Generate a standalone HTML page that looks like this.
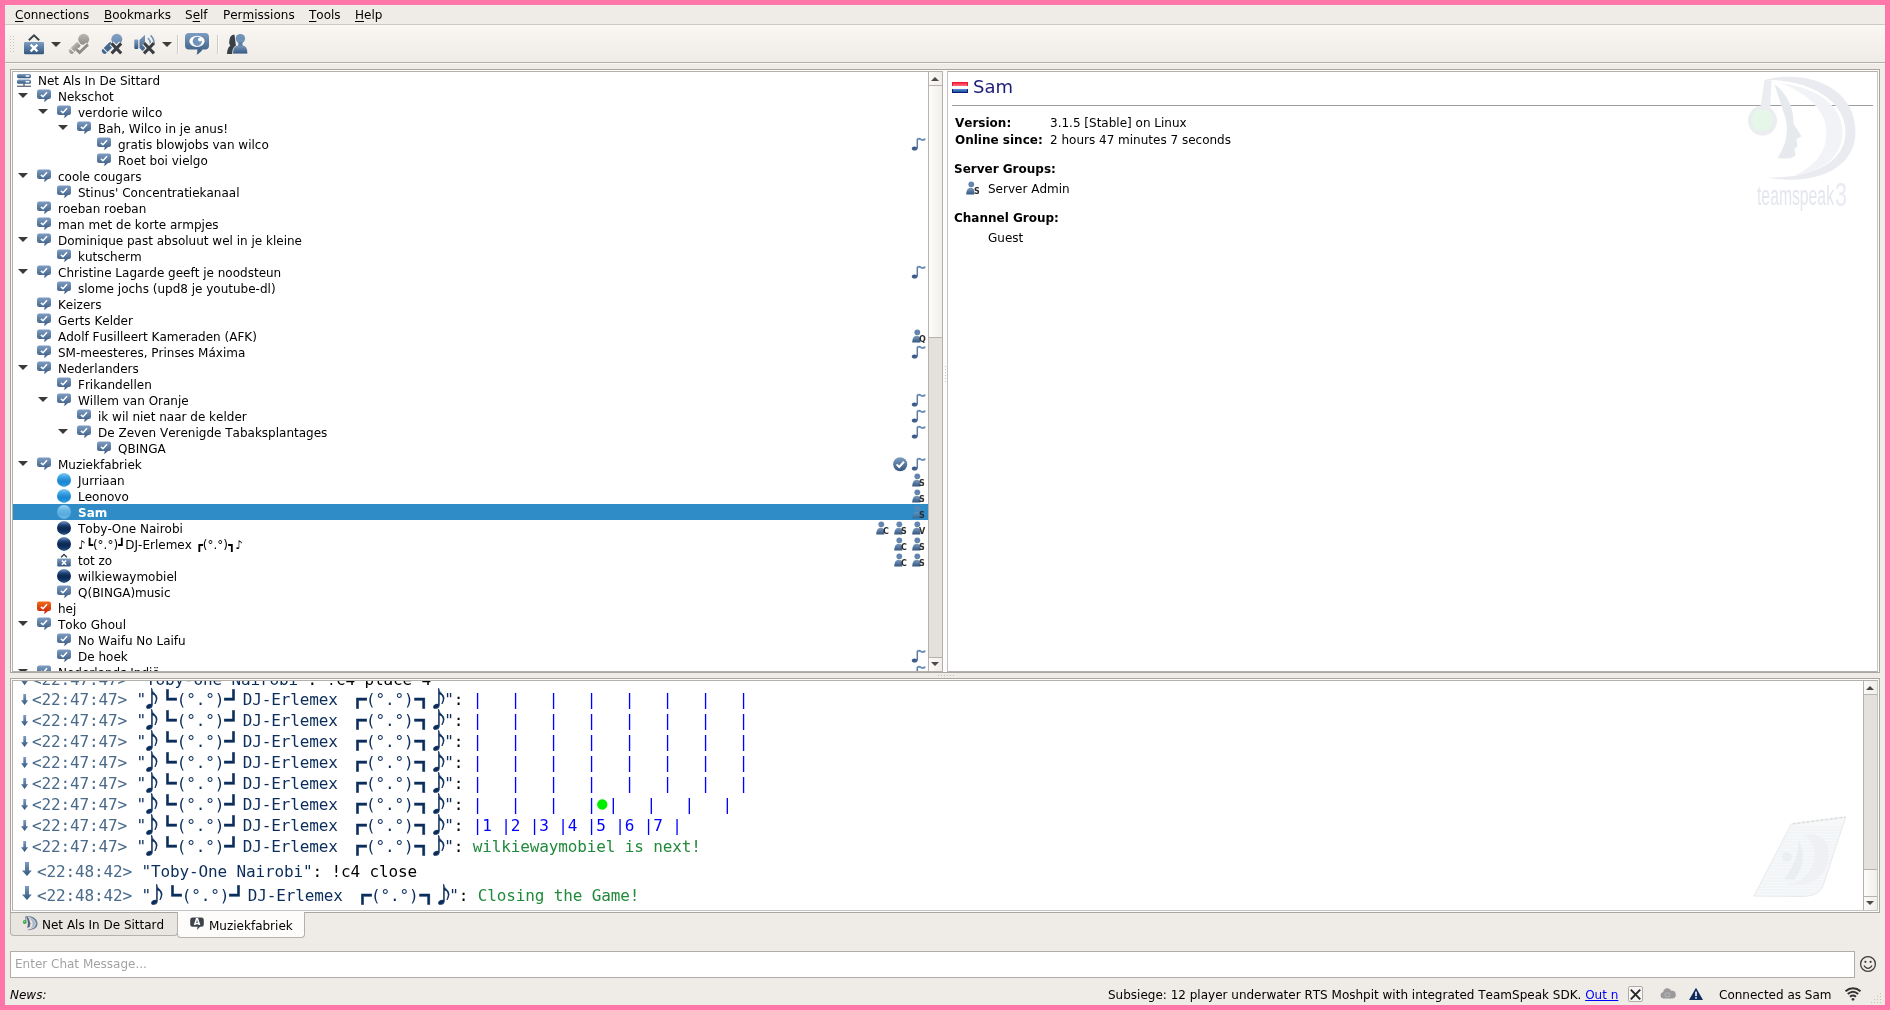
<!DOCTYPE html>
<html lang="nl">
<head>
<meta charset="utf-8">
<title>TeamSpeak 3</title>
<style>
html,body{margin:0;padding:0}
body{width:1890px;height:1010px;overflow:hidden;background:#ff77a8;position:relative;
 font-family:"DejaVu Sans","Liberation Sans",sans-serif;font-size:12px;color:#000;font-kerning:none}
#win{position:absolute;left:5px;top:5px;width:1880px;height:1000px;background:#efebe7;overflow:hidden;will-change:transform}
.abs{position:absolute}
/* menubar */
#menubar{position:absolute;left:0;top:0;width:1880px;height:19px;background:#efebe7;border-bottom:1px solid #cdc9c3}
#menubar span{position:absolute;top:3px;line-height:14px;white-space:nowrap}
#menubar u{text-decoration:underline;text-underline-offset:2px}
/* toolbar */
#toolbar{position:absolute;left:0;top:20px;width:1880px;height:37px;background:linear-gradient(#f9f6f3,#f5f2ee 40%,#efebe7);border-top:1px solid #fbf9f7;box-sizing:border-box}
#tbline{position:absolute;left:0;top:57px;width:1880px;height:1px;background:#b4b0aa}
#tbline2{position:absolute;left:0;top:58px;width:1880px;height:1px;background:#f8f6f4}
.sep{position:absolute;top:30px;width:1px;height:19px;background:#cfcbc5;border-right:1px solid #fbfaf8}
.dd{position:absolute;width:0;height:0;border-left:5px solid transparent;border-right:5px solid transparent;border-top:5px solid #3c3c3c;top:37px}
/* frames */
.frame{position:absolute;border:1px solid #a9a5a0;background:#fdfcfb;box-sizing:border-box}
.panel{position:absolute;border:1px solid #b4b0ab;background:#fff;box-sizing:border-box;overflow:hidden}
.frame .inner{position:absolute;left:1px;top:1px;right:1px;bottom:1px;border:1px solid #b4b0ab;border-right-color:#c6c5c4;border-bottom-color:#c6c5c4;background:#fff;overflow:hidden}
.frame.flat .inner{bottom:0;border-bottom-color:#b4b0ab}
/* tree */
.row{position:absolute;left:0;width:915px;height:16px;line-height:16px;white-space:nowrap}
.row .t{position:absolute;top:1px;line-height:16px}
.row.sel{background:#308cc6;color:#fff;font-weight:bold}
.row.sel .ic.pp{opacity:.6}
.ic{position:absolute;overflow:visible}
.tw{position:absolute;top:5px;margin-left:-.5px;width:0;height:0;border-left:5px solid transparent;border-right:5px solid transparent;border-top:5.500px solid #3a3a3a}
.pl{position:absolute;top:5.5px;font-size:8px;line-height:11px;font-weight:bold;color:#2d2d2d;font-family:"DejaVu Sans","Liberation Sans",sans-serif}
/* scrollbars */
.sb{position:absolute;background:#e4e1dd;border-left:1px solid #b6b2ad;box-sizing:border-box}
.sb .btn{position:absolute;left:0;right:0;height:13px;background:linear-gradient(90deg,#fbfaf9,#f1eeea)}
.sb .thumb{position:absolute;left:0;right:0;background:linear-gradient(90deg,#fdfcfb,#f1eeea);border-top:1px solid #b6b2ad;border-bottom:1px solid #b6b2ad;box-sizing:border-box}
.ar-up{position:absolute;left:2px;width:0;height:0;border-left:4px solid transparent;border-right:4px solid transparent;border-bottom:4px solid #4a4a4a}
.ar-dn{position:absolute;left:2px;width:0;height:0;border-left:4px solid transparent;border-right:4px solid transparent;border-top:4px solid #4a4a4a}
/* info */
#info b{font-weight:bold}
#info .l{position:absolute;white-space:nowrap;line-height:15px}
/* chat */
.cl{position:absolute;left:0;width:1850px;white-space:pre;font-family:"DejaVu Sans Mono","Liberation Mono",monospace;font-size:16px;letter-spacing:-0.133px}
.ct{position:absolute;left:0;top:0;margin-left:19px}
.ts{color:#4a6a8a}.nm{color:#0b2d5b}.mk{color:#000}.mb{color:#0000ff}.mg{color:#218a3c}
.dot{color:#00ee00;display:inline-block;width:12.4px;text-align:center;font-size:17.5px;line-height:0;letter-spacing:0;position:relative;top:-1.2px}
.fn{font-family:"Noto Sans CJK JP","IPAGothic",monospace;font-size:21px;letter-spacing:0;-webkit-text-stroke:0.6px currentColor;line-height:0;position:relative;top:0.7px;margin:0 -4.25px 0 -4.65px}
.fn.r,.fb.r{left:.8px}
.fb{font-family:"Noto Sans CJK JP","IPAGothic",monospace;font-size:18.5px;letter-spacing:0;-webkit-text-stroke:0.5px currentColor;line-height:0;position:relative;top:0.5px;margin:0 -0.05px 0 0.15px}
/* tabs */
.tab{position:absolute;box-sizing:border-box;border:1px solid #b4b0ab;border-top:none;border-radius:0 0 4px 4px;white-space:nowrap}
/* status */
#status span{position:absolute;white-space:nowrap;line-height:15px}
</style>
</head>
<body>
<svg width="0" height="0" style="position:absolute">
 <defs>
  <linearGradient id="gb" x1="0" y1="0" x2="0" y2="1"><stop offset="0" stop-color="#7e9dc2"/><stop offset="1" stop-color="#33557d"/></linearGradient>
  <linearGradient id="gb2" x1="0" y1="0" x2="0" y2="1"><stop offset="0" stop-color="#86a3c6"/><stop offset="1" stop-color="#6688b0"/></linearGradient>
  <linearGradient id="gg" x1="0" y1="0" x2="0" y2="1"><stop offset="0" stop-color="#b9b6b3"/><stop offset="1" stop-color="#8f8c89"/></linearGradient>
  <linearGradient id="gr" x1="0" y1="0" x2="0" y2="1"><stop offset="0" stop-color="#f06a1a"/><stop offset="1" stop-color="#c41a08"/></linearGradient>
  <linearGradient id="gcl" x1="0" y1="0" x2="0" y2="1"><stop offset="0" stop-color="#86cdf2"/><stop offset=".3" stop-color="#3aa3e2"/><stop offset=".6" stop-color="#1a86d0"/><stop offset=".85" stop-color="#2492d8"/><stop offset="1" stop-color="#4fb0e6"/></linearGradient>
  <linearGradient id="gcls" x1="0" y1="0" x2="0" y2="1"><stop offset="0" stop-color="#9fd3f1"/><stop offset=".35" stop-color="#68b7e6"/><stop offset=".7" stop-color="#55aade"/><stop offset="1" stop-color="#70bbe8"/></linearGradient>
  <linearGradient id="gcd" x1="0" y1="0" x2="0" y2="1"><stop offset="0" stop-color="#7b9cc6"/><stop offset=".28" stop-color="#24497c"/><stop offset=".5" stop-color="#0b2852"/><stop offset=".8" stop-color="#123563"/><stop offset="1" stop-color="#3a6397"/></linearGradient>
  <symbol id="i-ch" viewBox="0 0 16 16"><path d="M3.2 1.6h9.6a2.2 2.2 0 0 1 2.2 2.2v5a2.2 2.2 0 0 1-2.2 2.2h-.8l-3.800 3.300.5-3.300H3.200A2.200 2.200 0 0 1 1 8.800v-5a2.200 2.200 0 0 1 2.200-2.200z" fill="url(#gb)"/><path d="M4.900 6.900l2.100 1.900 4-4.500" stroke="#fff" stroke-width="1.500" fill="none"/></symbol>
  <symbol id="i-chr" viewBox="0 0 16 16"><path d="M3.2 1.6h9.6a2.2 2.2 0 0 1 2.2 2.2v5a2.2 2.2 0 0 1-2.2 2.2h-.8l-3.800 3.300.5-3.300H3.200A2.200 2.200 0 0 1 1 8.800v-5a2.200 2.200 0 0 1 2.200-2.200z" fill="url(#gr)"/><path d="M4.900 6.900l2.100 1.900 4-4.500" stroke="#fff" stroke-width="1.500" fill="none"/></symbol>
  <symbol id="i-server" viewBox="0 0 16 16"><rect x="1" y="2" width="14" height="4.200" rx="1.6" fill="url(#gb)"/><rect x="1" y="7.600" width="14" height="4.200" rx="1.6" fill="url(#gb)"/><rect x="9.500" y="3.300" width="4" height="1.500" rx=".7" fill="#fff"/><rect x="9.500" y="8.900" width="4" height="1.500" rx=".7" fill="#fff"/><rect x="7.300" y="11.800" width="1.400" height="2" fill="#46505a"/><rect x="1" y="13.700" width="14" height="1.100" fill="#46505a"/></symbol>
  <symbol id="i-cl" viewBox="0 0 16 16"><circle cx="8" cy="7.900" r="7" fill="url(#gcl)"/></symbol>
  <symbol id="i-cls" viewBox="0 0 16 16"><circle cx="8" cy="7.900" r="7" fill="url(#gcls)"/></symbol>
  <symbol id="i-cd" viewBox="0 0 16 16"><circle cx="8" cy="7.900" r="7" fill="url(#gcd)"/></symbol>
  <symbol id="i-away" viewBox="0 0 16 16"><path d="M5 5.300l3-2.900 3 2.900" stroke="#3c444c" stroke-width="1.400" fill="none"/><rect x="1.200" y="6.600" width="13.600" height="8" rx="1" fill="url(#gb)"/><path d="M5.900 8.500l4.200 4.200M10.100 8.500l-4.200 4.200" stroke="#fff" stroke-width="1.600"/></symbol>
  <symbol id="i-note" viewBox="0.8 0 16 16"><ellipse cx="4.400" cy="12.500" rx="2.800" ry="2" fill="#3c5d85"/><path d="M7.100 12.600V3" stroke="#5a7ba4" stroke-width="1.500"/><path d="M7.100 3.300c1.400-1 2.700-.6 3.900.3 1.300.9 2.700.5 3.900-1" stroke="#6d8eb6" stroke-width="1.800" fill="none"/></symbol>
  <symbol id="i-check" viewBox="0 0 16 16"><circle cx="7.200" cy="8.300" r="7" fill="url(#gb)"/><path d="M3.600 8.400l2.600 2.600 4.800-5.200" stroke="#fff" stroke-width="2" fill="none"/></symbol>
  <symbol id="i-person" viewBox="0 0 16 16"><circle cx="6.300" cy="4.300" r="2.900" fill="#6485ad"/><path d="M1.200 14.500c.2-4.200 1.500-6.800 4.600-6.800 2.400 0 3.500 1.300 3.500 3.600v3.200z" fill="url(#gb)"/></symbol>
  <symbol id="i-down" viewBox="0 0 16 21"><path d="M6.300 5h2.800v6.200h2L7.600 16 4 11.200h2.300z" fill="url(#gb)"/></symbol>
  <symbol id="i-down2" viewBox="0 0 16 24"><path d="M8 1.900h4v8.600h2.800L10 15.900 5 10.500h3z" fill="url(#gb)"/></symbol>
 </defs>
</svg>
<div id="win">
 <div id="menubar">
  <span style="left:10px"><u>C</u>onnections</span>
  <span style="left:99px"><u>B</u>ookmarks</span>
  <span style="left:180px">S<u>e</u>lf</span>
  <span style="left:218px">Per<u>m</u>issions</span>
  <span style="left:304px"><u>T</u>ools</span>
  <span style="left:350px"><u>H</u>elp</span>
 </div>
 <div id="toolbar"></div>
 <div id="tbline"></div><div id="tbline2"></div>
 
 <!-- toolbar grip -->
 <svg class="abs" style="left:5px;top:31px" width="5" height="17"><g fill="#c9c5bf"><rect x="0" y="0" width="1" height="1"/><rect x="3" y="0" width="1" height="1"/><rect x="0" y="3" width="1" height="1"/><rect x="3" y="3" width="1" height="1"/><rect x="0" y="6" width="1" height="1"/><rect x="3" y="6" width="1" height="1"/><rect x="0" y="9" width="1" height="1"/><rect x="3" y="9" width="1" height="1"/><rect x="0" y="12" width="1" height="1"/><rect x="3" y="12" width="1" height="1"/><rect x="0" y="15" width="1" height="1"/><rect x="3" y="15" width="1" height="1"/></g></svg>
 <!-- away -->
 <svg class="abs" style="left:17px;top:27px" width="24" height="24" viewBox="0 0 24 24"><path d="M6.800 8.200L12 3.200l5.200 5" stroke="#3a4249" stroke-width="1.900" fill="none"/><rect x="2" y="10" width="20" height="12.300" rx="1.300" fill="url(#gb)"/><path d="M8.600 12.600l6.800 6.800M15.400 12.600l-6.800 6.800" stroke="#fff" stroke-width="2.300"/></svg>
 <i class="dd" style="left:46px"></i>
 <!-- mic grey + check -->
 <svg class="abs" style="left:62px;top:27px" width="24" height="24" viewBox="0 0 24 24"><g transform="translate(1.2 -.2) rotate(-45 6.500 16.200)"><rect x="-.5" y="13.400" width="14" height="5.600" rx="2.700" fill="url(#gg)"/><rect x="2.600" y="13" width="1.100" height="6.400" fill="#f4f1ed"/></g><circle cx="16.700" cy="7.300" r="6.600" fill="#f5f2ee"/><circle cx="16.700" cy="7.300" r="5.500" fill="url(#gg)"/><path d="M9.200 17.200l3.400 3.400 8.300-8.200" stroke="#f5f2ee" stroke-width="5" fill="none"/><path d="M9.200 17.200l3.400 3.400 8.300-8.200" stroke="#8d8a87" stroke-width="2.800" fill="none"/></svg>
 <!-- mic blue + X -->
 <svg class="abs" style="left:95px;top:27px" width="24" height="24" viewBox="0 0 24 24"><g transform="translate(1.2 -.2) rotate(-45 6.500 16.200)"><rect x="-.5" y="13.400" width="14" height="5.600" rx="2.700" fill="#456890"/><rect x="2.600" y="13" width="1.100" height="6.400" fill="#f4f1ed"/></g><circle cx="16.800" cy="7.300" r="6.600" fill="#f5f2ee"/><circle cx="16.800" cy="7.300" r="5.500" fill="url(#gb2)"/><path d="M11.600 11.400l9.600 9.900M21.200 11.400l-9.600 9.900" stroke="#f5f2ee" stroke-width="5.400"/><path d="M11.600 11.400l9.600 9.900M21.200 11.400l-9.600 9.900" stroke="#3a3f45" stroke-width="3.100"/></svg>
 <!-- speaker + X -->
 <svg class="abs" style="left:128px;top:27px" width="24" height="24" viewBox="0 0 24 24"><rect x="1.300" y="7.600" width="4" height="9.400" rx="1" fill="url(#gb)"/><path d="M6.500 8L12 2.800v18.400L6.500 16z" fill="url(#gb)"/><path d="M15 6c2 2 2.600 4.500 2.600 6.500M17.600 3.400c2.800 2.800 3.600 6 3.600 8.600" stroke="#6f91b9" stroke-width="1.500" fill="none"/><path d="M11 11l10 10.300M21 11l-10 10.300" stroke="#f4f1ed" stroke-width="5.200"/><path d="M11 11l10 10.300M21 11l-10 10.300" stroke="#3a3f45" stroke-width="3.100"/></svg>
 <i class="dd" style="left:157px"></i>
 <div class="sep" style="left:172px"></div>
 <!-- subscribe bubble -->
 <svg class="abs" style="left:179px;top:27px" width="26" height="24" viewBox="0 0 26 24"><path d="M5 1h16a4 4 0 0 1 4 4v8.500a4 4 0 0 1-4 4h-2.500c-1.500 2.500-3.500 4-6 5.300.8-1.800 1-3.500.8-5.300H5a4 4 0 0 1-4-4V5a4 4 0 0 1 4-4z" fill="url(#gb)"/><ellipse cx="13" cy="9.300" rx="7.600" ry="5.600" fill="#fff"/><circle cx="13.300" cy="9.300" r="4.600" fill="#7192b9"/><circle cx="16" cy="7.600" r="2" fill="#fff"/></svg>
 <div class="sep" style="left:212px"></div>
 <!-- contacts -->
 <svg class="abs" style="left:220px;top:27px" width="24" height="24" viewBox="0 0 24 24"><path d="M2 22c.2-4 1-7 3.300-8.300C4 12 4 10 4.500 8 5 4 7 2.600 9.500 2.800L12 22z" fill="#3a4047"/><circle cx="15.400" cy="6.600" r="4.700" fill="#7091b8"/><path d="M7.600 22c0-5.500 2-9.300 7.800-9.300s7.400 3.800 7.400 9.300z" fill="url(#gb)" stroke="#f4f1ed" stroke-width=".8"/><rect x="13.300" y="10" width="4.200" height="4" fill="#5d7fa8"/></svg>


 <!-- channel tree -->
 <div class="frame" style="left:5px;top:64px;width:1870px;height:604px">
 <div class="panel" id="tree" style="left:1px;top:1px;width:931px;height:601px">
<div class="row" style="top:0px"><svg class="ic" style="left:3px;top:0px" width="16" height="16"><use href="#i-server"/></svg><span class="t" style="left:25px">Net Als In De Sittard</span></div>
<div class="row" style="top:16px"><i class="tw" style="left:5px"></i><svg class="ic" style="left:23px;top:0px" width="16" height="16"><use href="#i-ch"/></svg><span class="t" style="left:45px">Nekschot</span></div>
<div class="row" style="top:32px"><i class="tw" style="left:25px"></i><svg class="ic" style="left:43px;top:0px" width="16" height="16"><use href="#i-ch"/></svg><span class="t" style="left:65px">verdorie wilco</span></div>
<div class="row" style="top:48px"><i class="tw" style="left:45px"></i><svg class="ic" style="left:63px;top:0px" width="16" height="16"><use href="#i-ch"/></svg><span class="t" style="left:85px">Bah, Wilco in je anus!</span></div>
<div class="row" style="top:64px"><svg class="ic" style="left:83px;top:0px" width="16" height="16"><use href="#i-ch"/></svg><span class="t" style="left:105px">gratis blowjobs van wilco</span><svg class="ic" style="left:898px;top:0px" width="16" height="16"><use href="#i-note"/></svg></div>
<div class="row" style="top:80px"><svg class="ic" style="left:83px;top:0px" width="16" height="16"><use href="#i-ch"/></svg><span class="t" style="left:105px">Roet boi vielgo</span></div>
<div class="row" style="top:96px"><i class="tw" style="left:5px"></i><svg class="ic" style="left:23px;top:0px" width="16" height="16"><use href="#i-ch"/></svg><span class="t" style="left:45px">coole cougars</span></div>
<div class="row" style="top:112px"><svg class="ic" style="left:43px;top:0px" width="16" height="16"><use href="#i-ch"/></svg><span class="t" style="left:65px">Stinus&#x27; Concentratiekanaal</span></div>
<div class="row" style="top:128px"><svg class="ic" style="left:23px;top:0px" width="16" height="16"><use href="#i-ch"/></svg><span class="t" style="left:45px">roeban roeban</span></div>
<div class="row" style="top:144px"><svg class="ic" style="left:23px;top:0px" width="16" height="16"><use href="#i-ch"/></svg><span class="t" style="left:45px">man met de korte armpjes</span></div>
<div class="row" style="top:160px"><i class="tw" style="left:5px"></i><svg class="ic" style="left:23px;top:0px" width="16" height="16"><use href="#i-ch"/></svg><span class="t" style="left:45px">Dominique past absoluut wel in je kleine</span></div>
<div class="row" style="top:176px"><svg class="ic" style="left:43px;top:0px" width="16" height="16"><use href="#i-ch"/></svg><span class="t" style="left:65px">kutscherm</span></div>
<div class="row" style="top:192px"><i class="tw" style="left:5px"></i><svg class="ic" style="left:23px;top:0px" width="16" height="16"><use href="#i-ch"/></svg><span class="t" style="left:45px">Christine Lagarde geeft je noodsteun</span><svg class="ic" style="left:898px;top:0px" width="16" height="16"><use href="#i-note"/></svg></div>
<div class="row" style="top:208px"><svg class="ic" style="left:43px;top:0px" width="16" height="16"><use href="#i-ch"/></svg><span class="t" style="left:65px">slome jochs (upd8 je youtube-dl)</span></div>
<div class="row" style="top:224px"><svg class="ic" style="left:23px;top:0px" width="16" height="16"><use href="#i-ch"/></svg><span class="t" style="left:45px">Keizers</span></div>
<div class="row" style="top:240px"><svg class="ic" style="left:23px;top:0px" width="16" height="16"><use href="#i-ch"/></svg><span class="t" style="left:45px">Gerts Kelder</span></div>
<div class="row" style="top:256px"><svg class="ic" style="left:23px;top:0px" width="16" height="16"><use href="#i-ch"/></svg><span class="t" style="left:45px">Adolf Fusilleert Kameraden (AFK)</span><svg class="ic pp" style="left:898px;top:0px" width="16" height="16"><use href="#i-person"/></svg><b class="pl" style="left:906px">Q</b></div>
<div class="row" style="top:272px"><svg class="ic" style="left:23px;top:0px" width="16" height="16"><use href="#i-ch"/></svg><span class="t" style="left:45px">SM-meesteres, Prinses Máxima</span><svg class="ic" style="left:898px;top:0px" width="16" height="16"><use href="#i-note"/></svg></div>
<div class="row" style="top:288px"><i class="tw" style="left:5px"></i><svg class="ic" style="left:23px;top:0px" width="16" height="16"><use href="#i-ch"/></svg><span class="t" style="left:45px">Nederlanders</span></div>
<div class="row" style="top:304px"><svg class="ic" style="left:43px;top:0px" width="16" height="16"><use href="#i-ch"/></svg><span class="t" style="left:65px">Frikandellen</span></div>
<div class="row" style="top:320px"><i class="tw" style="left:25px"></i><svg class="ic" style="left:43px;top:0px" width="16" height="16"><use href="#i-ch"/></svg><span class="t" style="left:65px">Willem van Oranje</span><svg class="ic" style="left:898px;top:0px" width="16" height="16"><use href="#i-note"/></svg></div>
<div class="row" style="top:336px"><svg class="ic" style="left:63px;top:0px" width="16" height="16"><use href="#i-ch"/></svg><span class="t" style="left:85px">ik wil niet naar de kelder</span><svg class="ic" style="left:898px;top:0px" width="16" height="16"><use href="#i-note"/></svg></div>
<div class="row" style="top:352px"><i class="tw" style="left:45px"></i><svg class="ic" style="left:63px;top:0px" width="16" height="16"><use href="#i-ch"/></svg><span class="t" style="left:85px">De Zeven Verenigde Tabaksplantages</span><svg class="ic" style="left:898px;top:0px" width="16" height="16"><use href="#i-note"/></svg></div>
<div class="row" style="top:368px"><svg class="ic" style="left:83px;top:0px" width="16" height="16"><use href="#i-ch"/></svg><span class="t" style="left:105px">QBINGA</span></div>
<div class="row" style="top:384px"><i class="tw" style="left:5px"></i><svg class="ic" style="left:23px;top:0px" width="16" height="16"><use href="#i-ch"/></svg><span class="t" style="left:45px">Muziekfabriek</span><svg class="ic" style="left:898px;top:0px" width="16" height="16"><use href="#i-note"/></svg><svg class="ic" style="left:880px;top:0px" width="16" height="16"><use href="#i-check"/></svg></div>
<div class="row" style="top:400px"><svg class="ic" style="left:43px;top:0px" width="16" height="16"><use href="#i-cl"/></svg><span class="t" style="left:65px">Jurriaan</span><svg class="ic pp" style="left:898px;top:0px" width="16" height="16"><use href="#i-person"/></svg><b class="pl" style="left:906px">S</b></div>
<div class="row" style="top:416px"><svg class="ic" style="left:43px;top:0px" width="16" height="16"><use href="#i-cl"/></svg><span class="t" style="left:65px">Leonovo</span><svg class="ic pp" style="left:898px;top:0px" width="16" height="16"><use href="#i-person"/></svg><b class="pl" style="left:906px">S</b></div>
<div class="row sel" style="top:432px"><svg class="ic" style="left:43px;top:0px" width="16" height="16"><use href="#i-cls"/></svg><span class="t" style="left:65px">Sam</span><svg class="ic pp" style="left:898px;top:0px" width="16" height="16"><use href="#i-person"/></svg><b class="pl" style="left:906px">S</b></div>
<div class="row" style="top:448px"><svg class="ic" style="left:43px;top:0px" width="16" height="16"><use href="#i-cd"/></svg><span class="t" style="left:65px">Toby-One Nairobi</span><svg class="ic pp" style="left:898px;top:0px" width="16" height="16"><use href="#i-person"/></svg><b class="pl" style="left:906px">V</b><svg class="ic pp" style="left:880px;top:0px" width="16" height="16"><use href="#i-person"/></svg><b class="pl" style="left:888px">S</b><svg class="ic pp" style="left:862px;top:0px" width="16" height="16"><use href="#i-person"/></svg><b class="pl" style="left:870px">C</b></div>
<div class="row" style="top:464px"><svg class="ic" style="left:43px;top:0px" width="16" height="16"><use href="#i-cd"/></svg><span class="t" style="left:65px">♪┗(°.°)┛DJ-Erlemex ┏(°.°)┓♪</span><svg class="ic pp" style="left:898px;top:0px" width="16" height="16"><use href="#i-person"/></svg><b class="pl" style="left:906px">S</b><svg class="ic pp" style="left:880px;top:0px" width="16" height="16"><use href="#i-person"/></svg><b class="pl" style="left:888px">C</b></div>
<div class="row" style="top:480px"><svg class="ic" style="left:43px;top:0px" width="16" height="16"><use href="#i-away"/></svg><span class="t" style="left:65px">tot zo</span><svg class="ic pp" style="left:898px;top:0px" width="16" height="16"><use href="#i-person"/></svg><b class="pl" style="left:906px">S</b><svg class="ic pp" style="left:880px;top:0px" width="16" height="16"><use href="#i-person"/></svg><b class="pl" style="left:888px">C</b></div>
<div class="row" style="top:496px"><svg class="ic" style="left:43px;top:0px" width="16" height="16"><use href="#i-cd"/></svg><span class="t" style="left:65px">wilkiewaymobiel</span></div>
<div class="row" style="top:512px"><svg class="ic" style="left:43px;top:0px" width="16" height="16"><use href="#i-ch"/></svg><span class="t" style="left:65px">Q(BINGA)music</span></div>
<div class="row" style="top:528px"><svg class="ic" style="left:23px;top:0px" width="16" height="16"><use href="#i-chr"/></svg><span class="t" style="left:45px">hej</span></div>
<div class="row" style="top:544px"><i class="tw" style="left:5px"></i><svg class="ic" style="left:23px;top:0px" width="16" height="16"><use href="#i-ch"/></svg><span class="t" style="left:45px">Toko Ghoul</span></div>
<div class="row" style="top:560px"><svg class="ic" style="left:43px;top:0px" width="16" height="16"><use href="#i-ch"/></svg><span class="t" style="left:65px">No Waifu No Laifu</span></div>
<div class="row" style="top:576px"><svg class="ic" style="left:43px;top:0px" width="16" height="16"><use href="#i-ch"/></svg><span class="t" style="left:65px">De hoek</span><svg class="ic" style="left:898px;top:0px" width="16" height="16"><use href="#i-note"/></svg></div>
<div class="row" style="top:592px"><i class="tw" style="left:5px"></i><svg class="ic" style="left:23px;top:0px" width="16" height="16"><use href="#i-ch"/></svg><span class="t" style="left:45px">Nederlands Indië</span><svg class="ic" style="left:898px;top:0px" width="16" height="16"><use href="#i-note"/></svg></div>
  <div class="sb" style="left:915px;top:0;width:14px;height:599px">
   <div class="btn" style="top:0;border-bottom:1px solid #b6b2ad"><i class="ar-up" style="top:5px"></i></div>
   <div class="thumb" style="top:14px;height:252px;border-top:none"></div>
   <div class="btn" style="bottom:0;border-top:1px solid #b6b2ad"><i class="ar-dn" style="top:4px"></i></div>
  </div>
 </div>

 <!-- info panel -->
 <div class="panel" id="info" style="left:936px;top:1px;width:931px;height:601px;border-color:#b4b0ab #c6c5c4 #b4b0ab #c2c1c2">
  
  <svg class="abs" style="left:4px;top:10px" width="16" height="11" viewBox="0 0 16 11"><defs><linearGradient id="fr" x1="0" y1="0" x2="0" y2="1"><stop offset="0" stop-color="#ff2a3a"/><stop offset="1" stop-color="#f0768a"/></linearGradient><linearGradient id="fb" x1="0" y1="0" x2="0" y2="1"><stop offset="0" stop-color="#5a8fd0"/><stop offset="1" stop-color="#1c4f9c"/></linearGradient></defs><rect width="16" height="11" fill="#fff"/><rect width="16" height="4" fill="#f01830"/><rect x="1" y="1" width="14" height="3" fill="url(#fr)"/><rect y="7" width="16" height="4" fill="#0a1a80"/><rect x="1" y="7" width="14" height="3" fill="url(#fb)"/></svg>
  <span class="l" style="left:25px;top:3px;font-size:18px;line-height:23px;color:#1c1c7a">Sam</span>
  <div class="abs" style="left:4px;top:33px;width:921px;height:1px;background:#9d9d9d"></div>
  <span class="l" style="left:7px;top:44px"><b>Version:</b></span><span class="l" style="left:102px;top:44px">3.1.5 [Stable] on Linux</span>
  <span class="l" style="left:7px;top:61px"><b>Online since:</b></span><span class="l" style="left:102px;top:61px">2 hours 47 minutes 7 seconds</span>
  <span class="l" style="left:6px;top:90px"><b>Server Groups:</b></span>
  <svg class="ic" style="left:17px;top:108px" width="16" height="16"><use href="#i-person"/></svg><b class="pl" style="left:26px;top:113.5px">S</b>
  <span class="l" style="left:40px;top:110px">Server Admin</span>
  <span class="l" style="left:6px;top:139px"><b>Channel Group:</b></span>
  <span class="l" style="left:40px;top:159px">Guest</span>
  <!-- watermark -->
  <svg class="abs" style="left:790px;top:0px" width="135" height="140" viewBox="0 0 135 140">
   <g transform="translate(4.500 -4.500) scale(1 1.040)">
   <path d="M22 12C60 2 113 16 113 62c0 34-38 52-88 44 44 0 78-14 78-44C103 30 64 11 22 12z" fill="#e9ebf0"/>
   <path d="M38 15c34 4 62 20 62 47 0 24-20 38-48 42 20-9 32-22 32-42C84 42 64 24 38 15z" fill="#f2f3f7"/>
   <path d="M22 12l7 .5-1.500 30-11 6z" fill="#eaecf0"/>
   <path d="M32 16c12 8 20 24 19 38l8 12-5 3 1 7-3 2 1 6c-2 4-10 4-18 3 10-14 12-30 6-44z" fill="#e6e9ee"/>
   
   <circle cx="20" cy="51" r="14.500" fill="#ebedf0"/><circle cx="19.500" cy="50.500" r="10.500" fill="#e4f7e8"/>
   </g>
   <text x="19" y="133" font-family="'Liberation Sans',sans-serif" font-size="27" fill="#e3e6ed" textLength="77" lengthAdjust="spacingAndGlyphs">teamspeak</text>
   <text x="97" y="134" font-family="'Liberation Sans',sans-serif" font-size="34" fill="#e8ebf2" textLength="12" lengthAdjust="spacingAndGlyphs">3</text>
  </svg>

 </div></div>

 <svg class="abs" style="left:933px;top:670px" width="18" height="1"><g fill="#bdb9b3"><rect x="0" y="0" width="1" height="1"/><rect x="3" y="0" width="1" height="1"/><rect x="6" y="0" width="1" height="1"/><rect x="9" y="0" width="1" height="1"/><rect x="12" y="0" width="1" height="1"/><rect x="15" y="0" width="1" height="1"/></g></svg>
 <svg class="abs" style="left:940px;top:361px" width="1" height="18"><g fill="#c9c5bf"><rect x="0" y="0" width="1" height="1"/><rect x="0" y="3" width="1" height="1"/><rect x="0" y="6" width="1" height="1"/><rect x="0" y="9" width="1" height="1"/><rect x="0" y="12" width="1" height="1"/><rect x="0" y="15" width="1" height="1"/></g></svg>
 <!-- chat -->
 <div class="frame" style="left:5px;top:673px;width:1870px;height:235px"><div class="inner" id="chat">
<div class="cl" style="top:-11px;height:20px;line-height:20px"><svg class="ic" style="left:4px;top:0px" width="16" height="20"><use href="#i-down"/></svg><span class="ct" style="left:0px"><span class="ts">&lt;22:47:47&gt;</span> <span class="nm">"Toby-One Nairobi"</span>: <span class="mk">!c4 place 4</span></span></div>
<div class="cl" style="top:8px;height:21px;line-height:21px"><svg class="ic" style="left:4px;top:0px" width="16" height="21"><use href="#i-down"/></svg><span class="ct" style="left:0px"><span class="ts">&lt;22:47:47&gt;</span> <span class="nm">&quot;<span class="fn">♪</span><span class="fb">┗</span>(°.°)<span class="fb">┛</span>DJ-Erlemex <span class="fb r">┏</span>(°.°)<span class="fb r">┓</span><span class="fn r">♪</span>&quot;</span>: <span class="mb">|&nbsp;&nbsp;&nbsp;|&nbsp;&nbsp;&nbsp;|&nbsp;&nbsp;&nbsp;|&nbsp;&nbsp;&nbsp;|&nbsp;&nbsp;&nbsp;|&nbsp;&nbsp;&nbsp;|&nbsp;&nbsp;&nbsp;|</span></span></div>
<div class="cl" style="top:29px;height:21px;line-height:21px"><svg class="ic" style="left:4px;top:0px" width="16" height="21"><use href="#i-down"/></svg><span class="ct" style="left:0px"><span class="ts">&lt;22:47:47&gt;</span> <span class="nm">&quot;<span class="fn">♪</span><span class="fb">┗</span>(°.°)<span class="fb">┛</span>DJ-Erlemex <span class="fb r">┏</span>(°.°)<span class="fb r">┓</span><span class="fn r">♪</span>&quot;</span>: <span class="mb">|&nbsp;&nbsp;&nbsp;|&nbsp;&nbsp;&nbsp;|&nbsp;&nbsp;&nbsp;|&nbsp;&nbsp;&nbsp;|&nbsp;&nbsp;&nbsp;|&nbsp;&nbsp;&nbsp;|&nbsp;&nbsp;&nbsp;|</span></span></div>
<div class="cl" style="top:50px;height:21px;line-height:21px"><svg class="ic" style="left:4px;top:0px" width="16" height="21"><use href="#i-down"/></svg><span class="ct" style="left:0px"><span class="ts">&lt;22:47:47&gt;</span> <span class="nm">&quot;<span class="fn">♪</span><span class="fb">┗</span>(°.°)<span class="fb">┛</span>DJ-Erlemex <span class="fb r">┏</span>(°.°)<span class="fb r">┓</span><span class="fn r">♪</span>&quot;</span>: <span class="mb">|&nbsp;&nbsp;&nbsp;|&nbsp;&nbsp;&nbsp;|&nbsp;&nbsp;&nbsp;|&nbsp;&nbsp;&nbsp;|&nbsp;&nbsp;&nbsp;|&nbsp;&nbsp;&nbsp;|&nbsp;&nbsp;&nbsp;|</span></span></div>
<div class="cl" style="top:71px;height:21px;line-height:21px"><svg class="ic" style="left:4px;top:0px" width="16" height="21"><use href="#i-down"/></svg><span class="ct" style="left:0px"><span class="ts">&lt;22:47:47&gt;</span> <span class="nm">&quot;<span class="fn">♪</span><span class="fb">┗</span>(°.°)<span class="fb">┛</span>DJ-Erlemex <span class="fb r">┏</span>(°.°)<span class="fb r">┓</span><span class="fn r">♪</span>&quot;</span>: <span class="mb">|&nbsp;&nbsp;&nbsp;|&nbsp;&nbsp;&nbsp;|&nbsp;&nbsp;&nbsp;|&nbsp;&nbsp;&nbsp;|&nbsp;&nbsp;&nbsp;|&nbsp;&nbsp;&nbsp;|&nbsp;&nbsp;&nbsp;|</span></span></div>
<div class="cl" style="top:92px;height:21px;line-height:21px"><svg class="ic" style="left:4px;top:0px" width="16" height="21"><use href="#i-down"/></svg><span class="ct" style="left:0px"><span class="ts">&lt;22:47:47&gt;</span> <span class="nm">&quot;<span class="fn">♪</span><span class="fb">┗</span>(°.°)<span class="fb">┛</span>DJ-Erlemex <span class="fb r">┏</span>(°.°)<span class="fb r">┓</span><span class="fn r">♪</span>&quot;</span>: <span class="mb">|&nbsp;&nbsp;&nbsp;|&nbsp;&nbsp;&nbsp;|&nbsp;&nbsp;&nbsp;|&nbsp;&nbsp;&nbsp;|&nbsp;&nbsp;&nbsp;|&nbsp;&nbsp;&nbsp;|&nbsp;&nbsp;&nbsp;|</span></span></div>
<div class="cl" style="top:113px;height:21px;line-height:21px"><svg class="ic" style="left:4px;top:0px" width="16" height="21"><use href="#i-down"/></svg><span class="ct" style="left:0px"><span class="ts">&lt;22:47:47&gt;</span> <span class="nm">&quot;<span class="fn">♪</span><span class="fb">┗</span>(°.°)<span class="fb">┛</span>DJ-Erlemex <span class="fb r">┏</span>(°.°)<span class="fb r">┓</span><span class="fn r">♪</span>&quot;</span>: <span class="mb">|&nbsp;&nbsp;&nbsp;|&nbsp;&nbsp;&nbsp;|&nbsp;&nbsp;&nbsp;|<span class="dot">●</span>|&nbsp;&nbsp;&nbsp;|&nbsp;&nbsp;&nbsp;|&nbsp;&nbsp;&nbsp;|</span></span></div>
<div class="cl" style="top:134px;height:21px;line-height:21px"><svg class="ic" style="left:4px;top:0px" width="16" height="21"><use href="#i-down"/></svg><span class="ct" style="left:0px"><span class="ts">&lt;22:47:47&gt;</span> <span class="nm">&quot;<span class="fn">♪</span><span class="fb">┗</span>(°.°)<span class="fb">┛</span>DJ-Erlemex <span class="fb r">┏</span>(°.°)<span class="fb r">┓</span><span class="fn r">♪</span>&quot;</span>: <span class="mb">|1 |2 |3 |4 |5 |6 |7 |</span></span></div>
<div class="cl" style="top:155px;height:21px;line-height:21px"><svg class="ic" style="left:4px;top:0px" width="16" height="21"><use href="#i-down"/></svg><span class="ct" style="left:0px"><span class="ts">&lt;22:47:47&gt;</span> <span class="nm">&quot;<span class="fn">♪</span><span class="fb">┗</span>(°.°)<span class="fb">┛</span>DJ-Erlemex <span class="fb r">┏</span>(°.°)<span class="fb r">┓</span><span class="fn r">♪</span>&quot;</span>: <span class="mg">wilkiewaymobiel is next!</span></span></div>
<div class="cl" style="top:179.4px;height:24px;line-height:24px"><svg class="ic" style="left:4px;top:0px" width="16" height="24"><use href="#i-down2"/></svg><span class="ct" style="left:5px"><span class="ts">&lt;22:48:42&gt;</span> <span class="nm">"Toby-One Nairobi"</span>: <span class="mk">!c4 close</span></span></div>
<div class="cl" style="top:203.4px;height:24px;line-height:24px"><svg class="ic" style="left:4px;top:0px" width="16" height="24"><use href="#i-down2"/></svg><span class="ct" style="left:5px"><span class="ts">&lt;22:48:42&gt;</span> <span class="nm">&quot;<span class="fn">♪</span><span class="fb">┗</span>(°.°)<span class="fb">┛</span>DJ-Erlemex <span class="fb r">┏</span>(°.°)<span class="fb r">┓</span><span class="fn r">♪</span>&quot;</span>: <span class="mg">Closing the Game!</span></span></div>
  <svg class="abs" style="left:1727px;top:124px" width="115" height="98" viewBox="0 0 115 98"><defs><clipPath id="npc"><path d="M51.200 19L105.700 12 84 78C82 86 76 91 63 91.500L14 91z"/></clipPath></defs><path d="M51.200 19L105.700 12 84 78C82 86 76 91 63 91.500L14 91z" fill="#f7f8f9" stroke="#e3e4e5" stroke-width=".9"/><g clip-path="url(#npc)"><path d="M0 22h115" stroke="#edf1f4" stroke-width="1"/><path d="M0 25h115" stroke="#edf1f4" stroke-width="1"/><path d="M0 28h115" stroke="#edf1f4" stroke-width="1"/><path d="M0 31h115" stroke="#edf1f4" stroke-width="1"/><path d="M0 34h115" stroke="#edf1f4" stroke-width="1"/><path d="M0 37h115" stroke="#edf1f4" stroke-width="1"/><path d="M0 40h115" stroke="#edf1f4" stroke-width="1"/><path d="M0 43h115" stroke="#edf1f4" stroke-width="1"/><path d="M0 46h115" stroke="#edf1f4" stroke-width="1"/><path d="M0 49h115" stroke="#edf1f4" stroke-width="1"/><path d="M0 52h115" stroke="#edf1f4" stroke-width="1"/><path d="M0 55h115" stroke="#edf1f4" stroke-width="1"/><path d="M0 58h115" stroke="#edf1f4" stroke-width="1"/><path d="M0 61h115" stroke="#edf1f4" stroke-width="1"/><path d="M0 64h115" stroke="#edf1f4" stroke-width="1"/><path d="M0 67h115" stroke="#edf1f4" stroke-width="1"/><path d="M0 70h115" stroke="#edf1f4" stroke-width="1"/><path d="M0 73h115" stroke="#edf1f4" stroke-width="1"/><path d="M0 76h115" stroke="#edf1f4" stroke-width="1"/><path d="M0 79h115" stroke="#edf1f4" stroke-width="1"/><path d="M0 82h115" stroke="#edf1f4" stroke-width="1"/><path d="M0 85h115" stroke="#edf1f4" stroke-width="1"/><path d="M0 88h115" stroke="#edf1f4" stroke-width="1"/><path d="M0 91h115" stroke="#edf1f4" stroke-width="1"/><path d="M62 30c18-4 30 6 26 26-4 18-20 26-42 24 14-2 24-10 28-24 3-12-2-22-12-26z" fill="#eceff2" opacity=".8"/><path d="M58 34c2 10-2 26-14 40l10 1c10-12 12-28 4-41z" fill="#e9ecef" opacity=".8"/><circle cx="47" cy="52" r="5" fill="#eceff2"/></g><path d="M53 18.800l52-6.600" stroke="#dfe0e1" stroke-width="2" stroke-dasharray="2.200 2.500"/></svg>

  <div class="sb" style="left:1850px;top:0;width:14px;height:229px">
   <div class="btn" style="top:0;border-bottom:1px solid #b6b2ad"><i class="ar-up" style="top:5px"></i></div>
   <div class="thumb" style="top:188px;height:28px"></div>
   <div class="btn" style="bottom:0"><i class="ar-dn" style="top:4px"></i></div>
  </div>
 </div></div>

 
 <!-- tabs -->
 <div class="tab" style="left:5px;top:908px;width:168px;height:23px;background:#e9e5e1"></div>
 <div class="tab" style="left:172px;top:907px;width:128px;height:26px;background:#fdfcfb"></div>
 <svg class="abs" style="left:17px;top:910px" width="16" height="16" viewBox="0 0 16 16"><path d="M3.500 1.200C10 .2 15.600 3.800 15.600 8.800c0 4.200-4.600 7-11.400 6.200 5.400-.2 9.600-2.600 9.600-6.400 0-3.800-4.400-6.800-10.300-7.400z" fill="#6d7f98"/><path d="M5 1.800c3.200 1.400 5.600 4 5.600 7.200 0 2.200-1.400 4-3.400 5 3.600-.8 6-2.600 6-5.400C13.200 5.400 9.800 2.600 5 1.800z" fill="#a9b9d2"/><path d="M4 1.200l1.300.2c1.500 1.800 2.400 3.800 2.600 5.800l.9 1.500-.7.400.1 1.300-.5.300.1.800c-.3.800-1.500 1.200-2.800 1 1.500-2.600 1.300-6.600-1-11.300z" fill="#55647a"/><path d="M3.800 1.300v5" stroke="#6d7f98" stroke-width=".9"/><circle cx="2.700" cy="7" r="1.900" fill="#3aa84a"/><circle cx="2.300" cy="6.500" r=".7" fill="#8fe09a"/></svg>
 <span class="abs" style="left:37px;top:913px;line-height:15px;white-space:nowrap">Net Als In De Sittard</span>
 <svg class="abs" style="left:184px;top:911px" width="16" height="16" viewBox="0 0 16 16"><path d="M3.600 1.400h8.800a2.400 2.400 0 0 1 2.400 2.400v4.600a2.400 2.400 0 0 1-2.400 2.400h-1.400l-3 3.300.6-3.300H3.600a2.400 2.400 0 0 1-2.400-2.400V3.800a2.400 2.400 0 0 1 2.400-2.400z" fill="#3d444b"/><text x="8" y="9.400" text-anchor="middle" font-family="'DejaVu Sans','Liberation Sans',sans-serif" font-weight="bold" font-size="8.500" fill="#fff">A</text></svg>
 <span class="abs" style="left:204px;top:914px;line-height:15px;white-space:nowrap">Muziekfabriek</span>
 <!-- chat input -->
 <div class="abs" style="left:5px;top:946px;width:1845px;height:27px;box-sizing:border-box;border:1px solid #b0aca7;background:#fff"></div>
 <span class="abs" style="left:10px;top:952px;line-height:15px;color:#a3a3a3;white-space:nowrap">Enter Chat Message...</span>
 <svg class="abs" style="left:1854px;top:950px" width="18" height="18" viewBox="0 0 18 18"><circle cx="9" cy="9" r="7.400" fill="none" stroke="#3c3c3c" stroke-width="1.300"/><circle cx="6.400" cy="6.800" r="1.100" fill="#3c3c3c"/><circle cx="11.600" cy="6.800" r="1.100" fill="#3c3c3c"/><path d="M5 10.600c1 2 2.500 2.800 4 2.800s3-.8 4-2.800" stroke="#3c3c3c" stroke-width="1.200" fill="none"/></svg>
 <!-- status bar -->
 <div id="status">
  <span style="left:5px;top:983px;font-style:italic">News:</span>
  <span style="left:1103px;top:983px">Subsiege: 12 player underwater RTS Moshpit with integrated TeamSpeak SDK. <span style="position:static;color:#0000ff;text-decoration:underline">Out n</span></span>
  <div class="abs" style="left:1623px;top:981px;width:15px;height:16px;box-sizing:border-box;border:1px solid #b0aca7;border-radius:2px;background:#f8f6f4"></div>
  <svg class="abs" style="left:1623px;top:982px" width="15" height="15" viewBox="0 0 15 15"><path d="M2.800 2.600l9.400 9.800M12.200 2.600l-9.400 9.800" stroke="#2a2a2a" stroke-width="2"/></svg>
  <svg class="abs" style="left:1654px;top:982px" width="18" height="14" viewBox="0 0 18 14"><path d="M4.500 11.500a3.300 3.300 0 0 1-.3-6.500 4.200 4.200 0 0 1 8-1.200 3.900 3.900 0 0 1 1.400 7.700z" fill="#9a9a9a"/><rect x="6.200" y="6" width="4.600" height="3.600" rx=".8" fill="none" stroke="#bdbdbd" stroke-width=".8"/></svg>
  <svg class="abs" style="left:1683px;top:982px" width="16" height="14" viewBox="0 0 16 14"><path d="M8 .8L15 13H1z" fill="#0f2c5c"/><rect x="7.200" y="4.600" width="1.600" height="4.600" fill="#fff"/><rect x="7.200" y="10.200" width="1.600" height="1.500" fill="#fff"/></svg>
  <span style="left:1714px;top:983px">Connected as Sam</span>
  <svg class="abs" style="left:1839px;top:981px" width="18" height="16" viewBox="0 0 18 16"><g fill="none" stroke="#333" stroke-width="2"><path d="M1.500 5.200c4.500-4 10.500-4 15 0"/><path d="M3.800 8c3.200-2.800 7.200-2.800 10.400 0"/><path d="M6 10.700c2-1.600 4-1.600 6 0"/></g><circle cx="9" cy="13.300" r="1.400" fill="#3a3a3a"/></svg>
  <svg class="abs" style="left:1866px;top:987px" width="12" height="12" viewBox="0 0 12 12"><g fill="#c4c0ba"><rect x="9" y="1" width="1" height="1"/><rect x="6" y="4" width="1" height="1"/><rect x="9" y="4" width="1" height="1"/><rect x="3" y="7" width="1" height="1"/><rect x="6" y="7" width="1" height="1"/><rect x="9" y="7" width="1" height="1"/><rect x="0" y="10" width="1" height="1"/><rect x="3" y="10" width="1" height="1"/><rect x="6" y="10" width="1" height="1"/><rect x="9" y="10" width="1" height="1"/></g></svg>
 </div>

</div>
</body>
</html>
